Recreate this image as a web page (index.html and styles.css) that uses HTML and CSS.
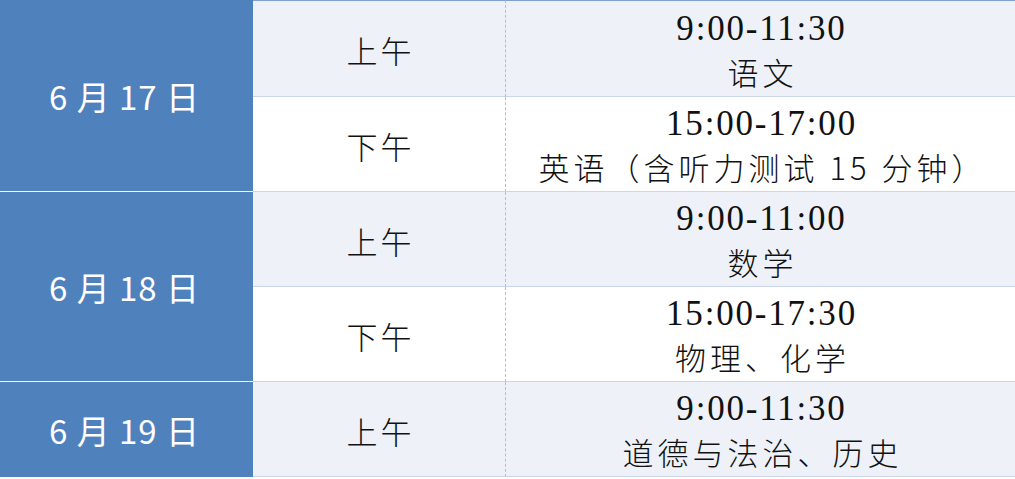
FILE: index.html
```html
<!DOCTYPE html>
<html lang="zh-CN">
<head>
<meta charset="utf-8">
<title>考试时间安排</title>
<link rel="stylesheet" href="styles.css">
</head>
<body>
<div class="schedule">
  <div class="date span2 first sep">6 月 17 日</div>
  <div class="period light top">上午</div>
  <div class="slot light top"><div class="time">9:00-11:30</div><div class="subj">语文</div></div>
  <div class="period">下午</div>
  <div class="slot"><div class="time">15:00-17:00</div><div class="subj">英语（含听力测试 15 分钟）</div></div>

  <div class="date span2 sep">6 月 18 日</div>
  <div class="period light">上午</div>
  <div class="slot light"><div class="time">9:00-11:00</div><div class="subj">数学</div></div>
  <div class="period">下午</div>
  <div class="slot"><div class="time">15:00-17:30</div><div class="subj">物理、化学</div></div>

  <div class="date">6 月 19 日</div>
  <div class="period light">上午</div>
  <div class="slot light"><div class="time">9:00-11:30</div><div class="subj">道德与法治、历史</div></div>
</div>
</body>
</html>
```

FILE: styles.css
```css
html, body {
  margin: 0;
  padding: 0;
  background: #ffffff;
}

.schedule {
  display: grid;
  grid-template-columns: 253px 253px 1fr;
  grid-template-rows: 97px 95px 95px 95px 95px;
  width: 1015px;
}

.date {
  background: #4f81bd;
  color: #ffffff;
  font-family: "Noto Sans CJK SC", "Noto Sans", sans-serif;
  font-size: 33px;
  letter-spacing: 1px;
  display: flex;
  align-items: center;
  justify-content: center;
  padding-right: 4px;
  box-sizing: border-box;
}

.date.span2 {
  grid-row: span 2;
}

.date.sep {
  border-bottom: 1px solid #f4f7fc;
}

.period,
.slot {
  box-sizing: border-box;
  border-bottom: 1px solid #c9d5e8;
  display: flex;
  flex-direction: column;
  align-items: center;
  justify-content: center;
  color: #111111;
}

.period {
  border-right: 1px dashed #bcbcbc;
  font-family: "Noto Sans CJK SC", sans-serif;
  font-weight: 300;
  font-size: 31px;
  letter-spacing: 3px;
  padding-top: 2px;
  padding-left: 3px;
}

.light {
  background: #eef2f8;
}

.top {
  border-top: 1px solid #7f9fcc;
}

.slot {
  padding-top: 2px;
}

.time {
  font-family: "Liberation Serif", serif;
  font-size: 35px;
  letter-spacing: 1.8px;
  line-height: 44px;
  height: 44px;
  padding-left: 2px;
}

.subj {
  font-family: "Noto Sans CJK SC", sans-serif;
  font-weight: 300;
  font-size: 31px;
  letter-spacing: 4px;
  line-height: 42px;
  height: 42px;
  padding-left: 4px;
}
```
